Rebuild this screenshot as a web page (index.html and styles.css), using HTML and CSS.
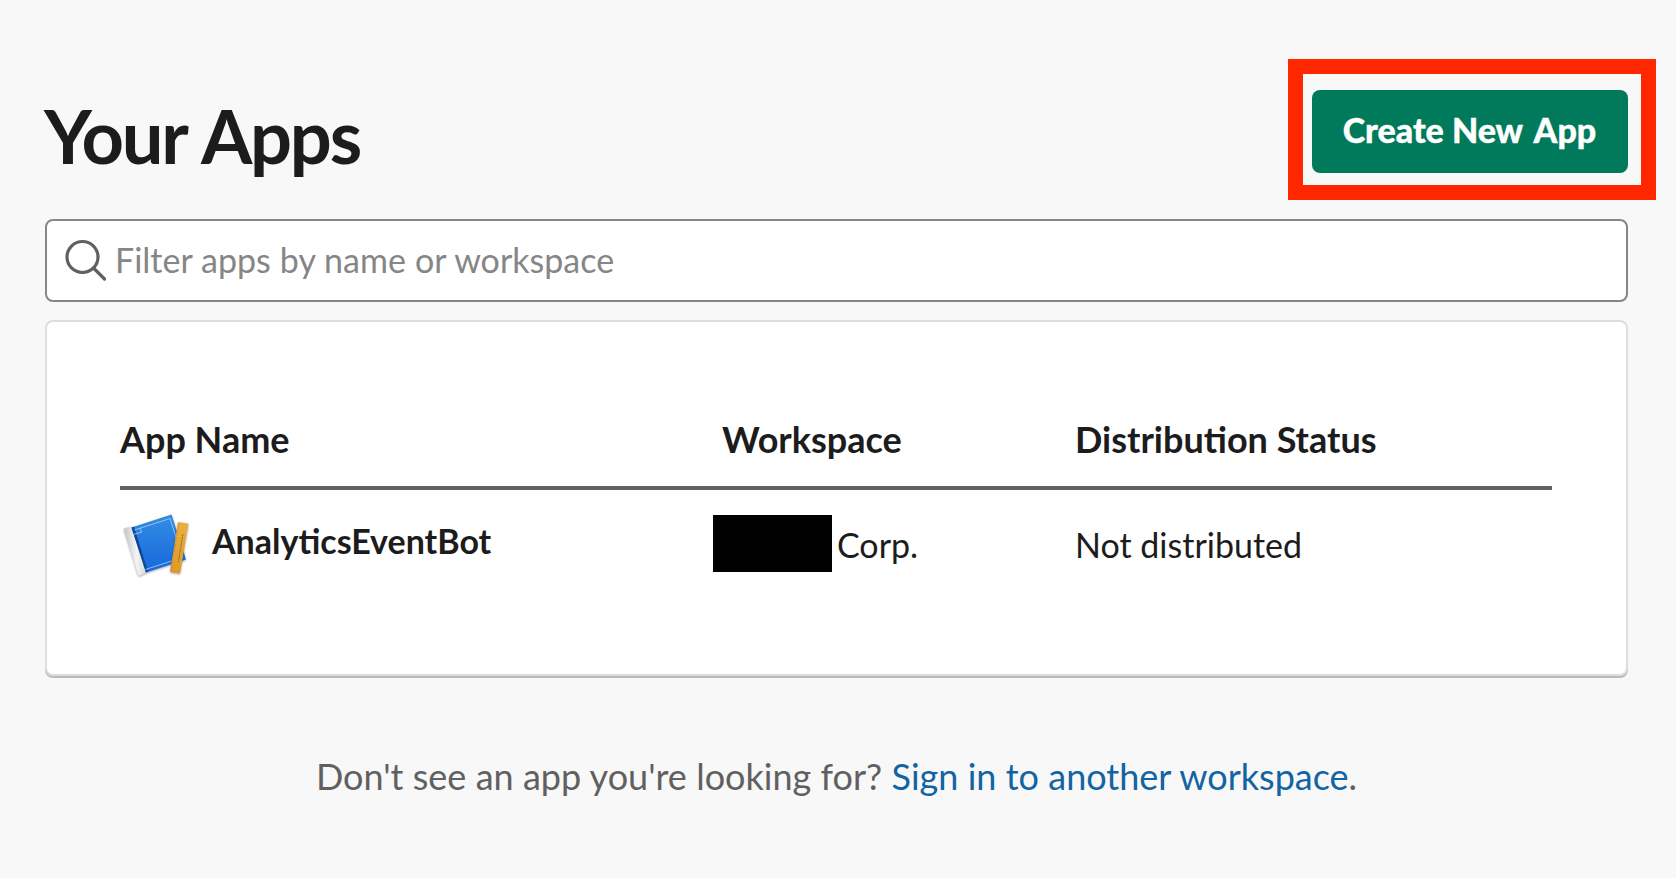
FILE: index.html
```
<!DOCTYPE html>
<html lang="en">
  <head>
    <meta charset="utf-8"/>
    <meta name="viewport" content="width=device-width, initial-scale=1">
    <title>Your Apps</title>
    <link rel="stylesheet" href="styles.css">
  </head>
<body>

<div class="page">
  <div class="header">
    <h1 class="title">Your Apps</h1>
    <div class="highlight">
      <button class="button">Create New <span class="button_word">App</span></button>
    </div>
  </div>

  <div class="search">
    <svg class="search_icon" width="44" height="44" viewBox="0 0 44 44">
      <circle cx="18.5" cy="18" r="15.5"/>
      <path d="M29.5 29L40.5 40"/>
    </svg>
    <input class="search_input" type="text" placeholder="Filter apps by name or workspace">
  </div>

  <div class="card">
    <div class="row row_head">
      <div>App Name</div>
      <div>Workspace</div>
      <div>Distribution Status</div>
    </div>
    <div class="row">
      <div class="app">
        <svg class="app_icon" width="72" height="72" viewBox="0 1 72 72">
          <defs>
            <linearGradient id="cover" x1="0" y1="0" x2="0" y2="1">
              <stop offset="0" stop-color="#338de2"/>
              <stop offset="1" stop-color="#1668dc"/>
            </linearGradient>
            <linearGradient id="spine" x1="0" y1="0.1" x2="1" y2="0">
              <stop offset="0" stop-color="#c4c4c4"/>
              <stop offset="0.5" stop-color="#f4f4f4"/>
              <stop offset="1" stop-color="#cfcfcf"/>
            </linearGradient>
            <linearGradient id="ruler" x1="0" y1="0" x2="0" y2="1">
              <stop offset="0" stop-color="#e9b040"/>
              <stop offset="1" stop-color="#df9a2b"/>
            </linearGradient>
          </defs>
          <!-- book -->
          <g class="shadow">
            <path d="M4 14.5Q4 13.5 5 13L12 11.5L26.5 57L20.5 60.5Q18.5 61 18 59.5Z" fill="url(#spine)"/>
            <path d="M11.5 12.500L51.5 -0.500L66 44.5L26 57.5Z" fill="url(#cover)"/>
          </g>
          <path d="M11.5 12.5L14 11.7L28 56.8L26 57.5Z" fill="#0d4796"/>
          <path d="M14.5 15L50 3.5L62.5 42.5L25.5 54.5M13.5 19.5L21.5 17.2L20.5 13.2" fill="none" stroke="#9ccaf4" stroke-width="0.9"/>
          <!-- ruler -->
          <g class="shadow">
            <path d="M58 7L68.5 8.5L60 58.5L50 57Z" fill="url(#ruler)"/>
          </g>
          <path d="M58.8 9L51.2 56" fill="none" stroke="#aa741b" stroke-width="1.4" stroke-dasharray="0.6 1.7"/>
          <path d="M63 19L58.3 47" fill="none" stroke="#9a6d24" stroke-width="1" stroke-dasharray="2 0.7 3 0.5"/>
        </svg>
        <span class="app_name">AnalyticsEventBot</span>
      </div>
      <div class="workspace"><span class="redacted"></span>Corp.</div>
      <div>Not distributed</div>
    </div>
  </div>

  <p class="footer">Don't see an app you're looking for? <a class="link" href="#">Sign in to another workspace</a>.</p>
</div>

</body>
</html>
```

FILE: styles.css
```
* {
  box-sizing: border-box;
}

body {
  margin: 0;
  font-family: Lato, "Noto Sans", sans-serif;
  font-size: 34px;
  line-height: 50px;
  color: #1d1c1d;
  background-color: #f8f8f8;
}

.page {
  padding: 59px 20px 0 45px;
}

.header {
  display: flex;
  justify-content: space-between;
  height: 160px;
}

.title {
  margin: 32px 0 0 -1px;
  font-size: 74px;
  line-height: 90px;
  font-weight: 700;
  letter-spacing: -2.2px;
  word-spacing: 2.5px;
}

.highlight {
  width: 368px;
  height: 141px;
  padding: 16px 0 0 9px;
  border: 15px solid #ff2600;
}

.button {
  display: block;
  width: 316px;
  height: 83px;
  padding: 0 1px 5px 0;
  border: none;
  border-radius: 8px;
  background-color: #007a5a;
  color: white;
  font-family: inherit;
  font-size: 34px;
  font-weight: 900;
  -webkit-text-stroke: 0.4px white;
  text-align: center;
  white-space: nowrap;
  cursor: pointer;
}

.button_word {
  margin-left: 3px;
}

.search {
  display: flex;
  align-items: center;
  width: 1583px;
  height: 83px;
  padding-left: 17px;
  border: 2px solid #868686;
  border-radius: 8px;
  background-color: white;
}

.search_icon {
  flex: none;
  fill: none;
  stroke: #616061;
  stroke-width: 3.2;
  stroke-linecap: round;
}

.search_input {
  flex: 1;
  padding: 0 0 2px;
  margin-left: 7px;
  border: none;
  outline: none;
  background: none;
  font-family: inherit;
  font-size: 34px;
  line-height: 50px;
  word-spacing: 0.3px;
}

.search_input::placeholder {
  color: #868686;
}

.card {
  width: 1583px;
  height: 356px;
  margin-top: 18px;
  padding: 90px 74px 0 73px;
  border: 2px solid #ddd;
  border-radius: 8px;
  background-color: white;
  box-shadow: 0 2px 0 #bbb;
}

.row {
  display: grid;
  grid-template-columns: 602px 353px 1fr;
  padding-top: 30px;
}

.row_head {
  height: 78px;
  padding-top: 0;
  border-bottom: 4px solid #616061;
  font-size: 36px;
  line-height: 54px;
  font-weight: 700;
}

.app {
  display: flex;
  margin-top: -4px;
}

.app_icon {
  flex: none;
  margin-right: 20px;
  overflow: visible;
}

.shadow {
  filter: drop-shadow(0 1.5px 1.2px rgba(0, 0, 0, 0.35));
}

.app_name {
  font-weight: 700;
}

.workspace {
  display: flex;
}

.redacted {
  width: 119px;
  height: 57px;
  margin: -5px 5px 0 -9px;
  background-color: black;
}

.footer {
  width: 1583px;
  margin: 73px 0 0;
  font-size: 36px;
  line-height: 54px;
  text-align: center;
  word-spacing: 0.1px;
  color: #616061;
}

.link {
  color: #1264a3;
  text-decoration: none;
}
```
